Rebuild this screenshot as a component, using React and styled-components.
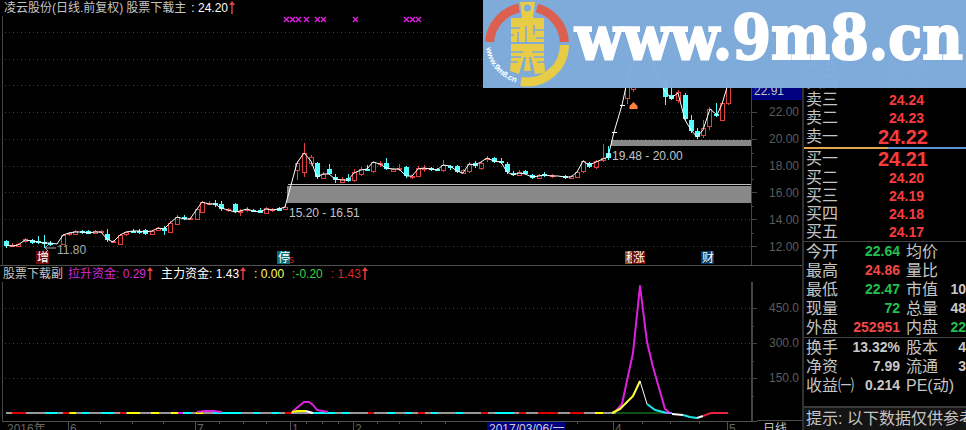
import React from "react";
import styled, { createGlobalStyle } from "styled-components";

const GlobalStyle = createGlobalStyle`
  * { box-sizing: border-box; }
  body {
    margin: 0;
    background: #000;
    color: #c4c4c4;
    font-family: "Liberation Sans", "Noto Sans CJK SC", sans-serif;
    font-size: 12px;
    overflow: hidden;
  }
`;

const Screen = styled.main`
  position: relative;
  display: grid;
  grid-template-columns: minmax(0, 1fr) 164px;
  height: 100vh;
  overflow: hidden;
`;

const Charts = styled.div`
  display: flex;
  flex-direction: column;
  min-width: 0;
`;

const Pane = styled.section`
  display: grid;
  grid-template-columns: minmax(0, 1fr) 45px;
`;

const Legend = styled.header`
  grid-column: 1 / -1;
  display: flex;
  align-items: center;
  height: ${(p) => (p.$divided ? 17 : 16)}px;
  padding-left: ${(p) => (p.$divided ? 3 : 4)}px;
  border-top: ${(p) => (p.$divided ? "1px solid #505050" : "0")};
  line-height: 16px;
  white-space: pre;
`;

const LegendItem = styled.span`
  display: flex;
  align-items: center;
  gap: 1px;
  margin-right: ${(p) => p.$after || 8}px;
  color: ${(p) => p.$color || "#c4c4c4"};
`;

const Plot = styled.svg`
  display: block;
  width: 100%;
  height: auto;
  font-size: 12px;
`;

const PriceAxis = styled.div`
  display: flex;
  flex-direction: column;
  align-items: flex-end;
  padding: ${(p) => p.$top}px 3px 0 0;
  color: #5c5c5c;
`;

const AxisLabel = styled.span`
  height: ${(p) => p.$step}px;
  line-height: 14px;

  &:last-child {
    height: 14px;
  }
`;

const CursorPrice = styled.span`
  align-self: stretch;
  height: 17px;
  margin: 0 -3px 5px -5px;
  padding-left: 2px;
  line-height: 17px;
  background: #000080;
  color: #c4c4c4;
`;

const Period = styled.span`
  align-self: stretch;
  height: 10px;
  margin: auto -3px 0 0;
  padding-left: 6px;
  border-top: 1px solid #505050;
  line-height: 16px;
  color: #c4c4c4;
  white-space: nowrap;
`;

const Side = styled.aside`
  display: flex;
  flex-direction: column;
  min-width: 0;
  overflow: hidden;
  border-left: 2px solid #303030;
  font-size: 16px;
`;

const Quotes = styled.div`
  padding-top: 55px;
  border-bottom: 1px solid #444;
`;

const QuoteRow = styled.div`
  display: grid;
  grid-template-columns: 70px 1fr;
  align-items: center;
  height: ${(p) => (p.$best ? 20 : 18)}px;
  padding-left: 2px;
  line-height: 18px;
`;

const Price = styled.strong`
  width: ${(p) => (p.$best ? 52 : 48)}px;
  font-size: ${(p) => (p.$best ? 20 : 14)}px;
  text-align: right;
  color: #f83c3c;
`;

const Spread = styled.div`
  height: 2px;
  background: linear-gradient(to right, #e0a850 52%, #5c94d8 52%);
`;

const Stats = styled.dl`
  display: grid;
  grid-template-columns: 40px 54px 38px 1fr;
  grid-auto-rows: 19px;
  align-items: center;
  margin: 0;
  padding-left: 2px;
  border-bottom: ${(p) => (p.$last ? "0" : "1px solid #444")};
  line-height: 19px;
`;

const Term = styled.dt`
  white-space: nowrap;
  padding-left: ${(p) => (p.$second ? 6 : 0)}px;
`;

const Value = styled.dd`
  margin: 0;
  font-size: 14px;
  font-weight: 700;
  text-align: right;
  color: ${(p) => p.$color || "#c8c8c8"};
`;

const Tip = styled.p`
  flex: 1;
  margin: 11px 0 0;
  padding-left: 2px;
  border-top: 2px solid #3a3a3a;
  background: #141414;
  line-height: 22px;
  white-space: nowrap;
`;

const Banner = styled.a`
  position: absolute;
  top: 0;
  right: 0;
  display: flex;
  align-items: flex-start;
  width: 50%;
  height: 88px;
  overflow: hidden;
  background: rgba(129, 174, 221, 0.98);
  color: #fff;
  text-decoration: none;
`;

const Emblem = styled.svg`
  flex: none;
  width: 88px;
  height: 88px;
`;

const SiteName = styled.span`
  margin-left: 4px;
  font-family: "DejaVu Serif Condensed", "DejaVu Serif", serif;
  font-size: 62px;
  font-weight: 700;
  line-height: 76px;
  -webkit-text-stroke: 2px #fff;
  white-space: nowrap;
`;

const RED = "#e04040";
const CYAN = "#50ffff";

const closeLine =
  "6,245 12,246 18,245 25,240 32,241 38,242 44,243 50,243 57,244 63,235 69,233 75,232 82,232 88,233 95,232 101,232 107,239 113,242 120,235 126,232 133,231 139,231 145,232 152,231 158,228 164,229 170,223 177,217 184,219 190,219 197,209 202,202 209,204 215,204 221,208 228,210 235,212 240,211 247,209 253,211 260,212 266,209 272,210 279,209 285,207 291,185 297,163 304,153 311,161 317,177 323,174 329,174 335,179 342,180 348,180 354,173 361,170 367,169 373,162 380,164 386,168 393,169 399,169 406,176 412,176 418,169 424,168 431,169 437,170 443,165 450,166 457,171 463,173 469,164 475,165 481,162 487,158 494,161 501,162 507,172 513,175 519,173 525,174 532,177 539,176 544,175 552,176 558,176 565,177 571,177 577,172 583,161 589,165 596,162 603,159 608,157 614,132 622,105 627,82 640,30 664,90 671,98 678,93 685,120 691,130 697,137 703,130 710,109 717,115 722,104 728,84";

// x, body top, body bottom, high, low, rising
const candles = [
  [6, 241, 246, 240, 248, 0], [12, 245, 246, 243, 247, 1], [18, 244, 247, 243, 247, 1], [25, 239, 242, 238, 243, 1],
  [32, 240, 243, 239, 244, 0], [38, 241, 242, 236, 244, 0], [44, 242, 244, 235, 248, 0], [50, 243, 244, 241, 246, 0],
  [63, 235, 245, 234, 245, 1], [69, 233, 235, 232, 236, 1], [75, 231, 235, 230, 235, 1], [82, 231, 233, 230, 234, 0],
  [88, 231, 234, 230, 234, 0], [95, 231, 234, 230, 234, 1], [101, 231, 232, 230, 233, 1], [107, 234, 240, 229, 242, 0],
  [113, 241, 242, 240, 243, 1], [120, 235, 245, 234, 245, 1], [126, 232, 235, 231, 236, 1], [133, 231, 232, 229, 233, 0],
  [139, 231, 232, 229, 234, 0], [145, 230, 234, 229, 235, 0], [152, 231, 235, 230, 235, 1], [158, 228, 231, 227, 231, 1],
  [164, 228, 231, 226, 235, 0], [170, 223, 233, 221, 233, 1], [177, 217, 225, 215, 225, 1], [184, 217, 219, 215, 220, 0],
  [190, 218, 220, 217, 220, 1], [197, 209, 220, 208, 220, 1], [202, 202, 213, 201, 213, 1], [209, 203, 205, 201, 205, 1],
  [215, 203, 205, 200, 207, 0], [221, 204, 209, 201, 211, 0], [228, 209, 211, 208, 212, 1], [235, 204, 212, 203, 213, 0],
  [240, 211, 212, 209, 216, 1], [247, 209, 210, 207, 212, 1], [253, 210, 211, 209, 212, 0], [260, 210, 213, 208, 213, 0],
  [266, 208, 214, 207, 214, 1], [272, 209, 211, 208, 212, 1], [279, 208, 211, 207, 211, 0], [285, 207, 210, 206, 210, 1],
  [297, 163, 171, 161, 180, 1], [304, 153, 173, 143, 177, 1], [311, 157, 164, 155, 166, 1], [317, 163, 177, 162, 179, 0],
  [323, 174, 179, 172, 179, 1], [329, 169, 174, 164, 175, 0], [335, 177, 180, 174, 183, 0], [342, 179, 183, 177, 183, 1],
  [348, 178, 181, 174, 182, 0], [354, 172, 181, 169, 182, 1], [361, 169, 175, 167, 176, 1], [367, 169, 170, 165, 171, 0],
  [373, 162, 172, 161, 173, 1], [380, 163, 165, 161, 167, 1], [386, 163, 169, 158, 170, 0], [393, 169, 172, 168, 172, 1],
  [399, 168, 169, 164, 171, 1], [406, 167, 176, 166, 178, 0], [412, 176, 178, 175, 179, 1], [418, 168, 177, 166, 177, 1],
  [424, 168, 169, 165, 172, 1], [431, 168, 170, 167, 171, 0], [437, 169, 170, 168, 171, 0], [443, 165, 171, 160, 172, 1],
  [450, 166, 167, 165, 170, 0], [457, 166, 172, 165, 173, 0], [463, 170, 174, 169, 174, 1], [469, 164, 172, 162, 173, 1],
  [475, 163, 166, 161, 168, 0], [481, 163, 169, 161, 170, 1], [487, 158, 160, 156, 162, 1], [494, 158, 162, 157, 163, 0],
  [501, 161, 163, 158, 164, 0], [507, 164, 172, 162, 174, 0], [513, 173, 175, 171, 176, 0], [519, 172, 176, 170, 176, 1],
  [525, 171, 174, 170, 174, 0], [532, 175, 178, 174, 179, 0], [539, 175, 179, 174, 179, 1], [544, 174, 176, 172, 177, 0],
  [552, 175, 177, 174, 178, 1], [565, 176, 178, 175, 179, 0], [571, 176, 179, 175, 179, 1], [577, 172, 178, 171, 178, 1],
  [583, 161, 172, 160, 173, 1], [589, 163, 167, 162, 168, 0], [596, 161, 168, 160, 169, 1], [603, 158, 161, 144, 162, 1],
  [608, 153, 158, 146, 160, 0], [627, 86, 99, 86, 104, 1], [633, 86, 90, 86, 92, 1], [665, 80, 97, 80, 105, 0],
  [671, 95, 99, 80, 100, 0], [678, 92, 101, 90, 103, 1], [685, 95, 119, 93, 121, 0], [691, 120, 131, 115, 133, 0],
  [697, 131, 137, 128, 139, 0], [703, 128, 136, 120, 138, 1], [709, 109, 127, 107, 130, 1], [716, 114, 116, 103, 117, 0],
  [722, 103, 121, 102, 121, 1], [728, 82, 104, 80, 105, 1],
];

const marks = [286, 292, 298, 306, 317, 323, 355, 406, 412, 418];
const upperGrid = [32, 59, 85, 112, 139, 166, 192, 219, 246];
const lowerGrid = [308, 343, 378];

const baseline = [
  [12, 26, "#e00000"], [45, 57, "#00ffff"], [63, 69, "#e00000"], [70, 76, "#ffff00"], [82, 89, "#00ffff"],
  [101, 114, "#00ffff"], [120, 126, "#e00000"], [127, 140, "#ffff00"], [151, 159, "#ffff00"], [171, 178, "#ffff00"],
  [178, 183, "#e020e0"], [183, 191, "#00ffff"], [196, 203, "#ffff00"], [213, 241, "#00ffff"], [253, 260, "#00ffff"],
  [272, 279, "#00ffff"], [285, 291, "#e00000"], [313, 335, "#00ffff"], [342, 350, "#00ffff"], [368, 374, "#e00000"],
  [387, 395, "#00ffff"], [405, 412, "#00ffff"], [418, 425, "#e00000"], [431, 438, "#00ffff"], [456, 463, "#00ffff"],
  [481, 488, "#e00000"], [495, 514, "#00ffff"], [519, 526, "#e00000"], [538, 558, "#e00000"], [570, 584, "#e00000"],
  [595, 603, "#ffff00"],
];

const months = [[70, "6"], [197, "7"], [292, "1"], [355, "2"], [615, "4"], [729, "5"]];
const minorTicks = [100, 132, 163, 219, 243, 266, 306, 322, 338, 377, 399, 421, 445, 577, 642, 670, 699];

const quotes = {
  sell: [["卖五", "24.26"], ["卖四", "24.25"], ["卖三", "24.24"], ["卖二", "24.23"], ["卖一", "24.22", true]],
  buy: [["买一", "24.21", true], ["买二", "24.20"], ["买三", "24.19"], ["买四", "24.18"], ["买五", "24.17"]],
};

const G = "#20c050";
const R = "#f04848";
const sessionStats = [
  ["今开", "22.64", G, "均价", ""],
  ["最高", "24.86", R, "量比", ""],
  ["最低", "22.47", G, "市值", "10"],
  ["现量", "72", G, "总量", "48"],
  ["外盘", "252951", R, "内盘", "22", G],
];
const companyStats = [
  ["换手", "13.32%", null, "股本", "4"],
  ["净资", "7.99", null, "流通", "3"],
  ["收益㈠", "0.214", null, "PE(动)", ""],
];

function UpArrow() {
  return (
    <svg width="6" height="14" viewBox="0 0 6 14" aria-hidden="true">
      <path d="M3 0 L6 4 H0 Z" fill="#f04040" />
      <path d="M3 3V13" stroke="#f04040" strokeWidth="1.4" />
    </svg>
  );
}

function Candle({ x, top, bottom, high, low, rising }) {
  const height = Math.max(1, bottom - top - 1);
  return rising ? (
    <g stroke={RED} fill="none" shapeRendering="crispEdges">
      <path d={`M${x + 0.5} ${high}V${top}M${x + 0.5} ${bottom}V${low}`} />
      <rect x={x - 1.5} y={top + 0.5} width="4" height={height} />
    </g>
  ) : (
    <g stroke={CYAN} fill={CYAN} shapeRendering="crispEdges">
      <path d={`M${x + 0.5} ${high}V${low}`} />
      <rect x={x - 1.5} y={top + 0.5} width="4" height={height} />
    </g>
  );
}

function Grid({ lines, minor, top, bottom, axisWidth }) {
  return (
    <g shapeRendering="crispEdges">
      {lines.map((y) => (
        <g key={y}>
          <path d={`M5 ${y + 0.5}H751`} stroke="#404040" strokeDasharray="1 3" />
          <path d={`M751 ${y + 0.5}h6M751 ${y + minor + 0.5}h3`} stroke="#444" />
        </g>
      ))}
      <path d={`M2.5 ${top}V${bottom}`} stroke="#444" />
      <path d={`M751.5 ${top}V${bottom}`} stroke="#444" strokeWidth={axisWidth} />
    </g>
  );
}

function Tag({ x, color, text }) {
  return (
    <g>
      <rect x={x} y="251" width="13" height="13" fill={color} />
      <text x={x + 1} y="262" fill="#fff">{text}</text>
    </g>
  );
}

function PriceChart() {
  return (
    <Plot viewBox="0 16 757 249" role="img" aria-label="日线">
      <Grid lines={upperGrid} minor={-13} top={16} bottom={265} axisWidth={1} />
      {marks.map((x) => (
        <path key={x} d={`M${x - 2} 17l5 5m0-5l-5 5`} stroke="#e020e0" strokeWidth="1.4" />
      ))}
      <path d="M288 184.5H751" stroke="#c0c0c0" shapeRendering="crispEdges" />
      <rect x="287" y="186" width="464" height="17" fill="#888" />
      <rect x="611" y="140" width="140" height="6" fill="#888" />
      {candles.map(([x, top, bottom, high, low, rising]) => (
        <Candle key={x} {...{ x, top, bottom, high, low, rising }} />
      ))}
      <polyline points={closeLine} fill="none" stroke="#fff" />
      <path d="M612 132.5h5M620 105.5h5" stroke="#fff" />
      <path d="M633.5 102l4 4v3h-8v-3z" fill="#ff8040" />
      <path d="M45 248H56M48 245l-3 3 3 3" fill="none" stroke="#aaa" />
      <text x="57" y="254" fill="#aaa">11.80</text>
      <text x="289" y="217" fill="#c4c4c4">15.20 - 16.51</text>
      <text x="612" y="160" fill="#c4c4c4">19.48 - 20.00</text>
      <Tag x={36} color="#700808" text="增" />
      <text x="289" y="263" fill="#d02020" fontSize="10">s</text>
      <Tag x={277} color="#087078" text="停" />
      <Tag x={625} color="#905020" text="移" />
      <Tag x={632} color="#700808" text="涨" />
      <Tag x={701} color="#083868" text="财" />
    </Plot>
  );
}

function FundsChart() {
  return (
    <Plot viewBox="0 282 757 148" role="img" aria-label="主力资金">
      <Grid lines={lowerGrid} minor={18} top={282} bottom={421} axisWidth={2} />
      <path d="M6 413H616" stroke="#999" strokeWidth="2" />
      {baseline.map(([from, to, color]) => (
        <path key={from} d={`M${from} 413H${to}`} stroke={color} strokeWidth="2" />
      ))}
      <g fill="none" strokeWidth="2" strokeLinejoin="round">
        <path d="M197 412L205 411L213 411L222 412" stroke="#e020e0" />
        <path d="M292 412L299 406L304 402L309 402L313 405L317 410L328 412" stroke="#e020e0" />
        <path d="M292 412L297 411L306 411" stroke="#ffff00" />
        <path d="M306 411L313 413" stroke="#fff" />
        <path d="M614 413H666" stroke="#20a020" strokeWidth="1" />
        <path d="M615 412L622 404L633 353L640 286L647 342L653 367L665 409L670 413" stroke="#e020e0" />
        <path d="M612 413L620 409L627 402L633 396L640 381" stroke="#ffff40" />
        <path d="M640 381L647 404" stroke="#fff" strokeWidth="1" />
        <path d="M647 404L655 410L667 413" stroke="#20e8f0" />
        <path d="M665 413H672" stroke="#a080ff" />
        <path d="M672 414L683 415" stroke="#fff" />
        <path d="M683 415L690 417L697 418" stroke="#20e8f0" />
        <path d="M697 418L703 416" stroke="#fff" />
        <path d="M703 416L711 413H728" stroke="#e82040" />
      </g>
      <g stroke="#505050" shapeRendering="crispEdges">
        <path d="M2 421.5H757" />
        {months.map(([x]) => <path key={x} d={`M${x - 1.5} 421V430`} />)}
        {minorTicks.map((x) => <path key={x} d={`M${x + 0.5} 421v3`} />)}
      </g>
      <text x="7" y="433" fill="#666">2016年</text>
      {months.map(([x, label]) => <text key={x} x={x} y="433" fill="#666">{label}</text>)}
      <rect x="487" y="422" width="78" height="8" fill="#000080" />
      <text x="489" y="433" fill="#d0d0d0">2017/03/06/一</text>
    </Plot>
  );
}

function QuoteLine({ label, value, best }) {
  return (
    <QuoteRow $best={best}>
      <span>{label}</span>
      <Price $best={best}>{value}</Price>
    </QuoteRow>
  );
}

function StatGrid({ rows, last }) {
  return (
    <Stats $last={last}>
      {rows.map(([a, va, color, b, vb, colorB]) => (
        <React.Fragment key={a}>
          <Term>{a}</Term>
          <Value $color={color}>{va}</Value>
          <Term $second>{b}</Term>
          <Value $color={colorB}>{vb}</Value>
        </React.Fragment>
      ))}
    </Stats>
  );
}

function Logo() {
  return (
    <Emblem viewBox="483 0 88 88" aria-hidden="true">
      <g fill="none" strokeWidth="9">
        <path d="M489.5 42A37.5 37.5 0 0 1 519 8" stroke="#dc6050" />
        <path d="M537 8A37.5 37.5 0 0 1 564.5 42" stroke="#dc6050" />
        <path d="M564.5 45A37.5 37.5 0 0 1 521 81.5" stroke="#e8cc48" />
      </g>
      <g fill="#e8cc48">
        <path d="M520 2H535L533 18H544V42H511V18H522Z" />
        <path d="M511 44H544V60L545 73L535 74L531 57H524L519 74L510 71L511 60Z" />
        <path d="M526 57H529L531 71H524Z" />
      </g>
      <circle cx="527.5" cy="8" r="3.5" fill="#7fabd9" />
      <path
        d="M511 28H520M534 25V30H544M534 30V35M526 26V42M518 32V42M511 35H514M536 38H544M511 52H523M532 52H544M511 57H521M534 57H544M511 62H518M537 62H544"
        fill="none"
        stroke="#7fabd9"
        strokeWidth="1.5"
      />
      <path id="emblem-arc" d="M486 48A42 42 0 0 0 524 84" fill="none" />
      <text fill="#fff" fontSize="8" fontWeight="700">
        <textPath href="#emblem-arc">www.9m8.cn</textPath>
      </text>
    </Emblem>
  );
}

export default function App() {
  return (
    <>
      <GlobalStyle />
      <Screen>
        <Charts>
          <Pane>
            <Legend>
              <LegendItem $after={3}>凌云股份(日线.前复权)</LegendItem>
              <LegendItem $after={5}>股票下载主</LegendItem>
              <LegendItem $color="#fff">: 24.20<UpArrow /></LegendItem>
            </Legend>
            <PriceChart />
            <PriceAxis $top={67}>
              <CursorPrice>22.91</CursorPrice>
              {["22.00", "20.00", "18.00", "16.00", "14.00", "12.00"].map((v) => (
                <AxisLabel key={v} $step={27}>{v}</AxisLabel>
              ))}
            </PriceAxis>
          </Pane>
          <Pane>
            <Legend $divided>
              <LegendItem $after={5}>股票下载副</LegendItem>
              <LegendItem $color="#d828d8">拉升资金: 0.29<UpArrow /></LegendItem>
              <LegendItem $color="#fff">主力资金: 1.43<UpArrow /></LegendItem>
              <LegendItem $color="#ffff60">: 0.00</LegendItem>
              <LegendItem $color="#30d840">:-0.20</LegendItem>
              <LegendItem $color="#d82828">: 1.43<UpArrow /></LegendItem>
            </Legend>
            <FundsChart />
            <PriceAxis $top={19}>
              {["450.0", "300.0", "150.0"].map((v) => (
                <AxisLabel key={v} $step={35}>{v}</AxisLabel>
              ))}
              <Period>日线</Period>
            </PriceAxis>
          </Pane>
        </Charts>
        <Side>
          <Quotes>
            {quotes.sell.map(([label, value, best]) => (
              <QuoteLine key={label} {...{ label, value, best }} />
            ))}
            <Spread />
            {quotes.buy.map(([label, value, best]) => (
              <QuoteLine key={label} {...{ label, value, best }} />
            ))}
          </Quotes>
          <StatGrid rows={sessionStats} />
          <StatGrid rows={companyStats} last />
          <Tip>提示: 以下数据仅供参考</Tip>
        </Side>
        <Banner href="#home" aria-label="www.9m8.cn">
          <Logo />
          <SiteName>www.9m8.cn</SiteName>
        </Banner>
      </Screen>
    </>
  );
}
